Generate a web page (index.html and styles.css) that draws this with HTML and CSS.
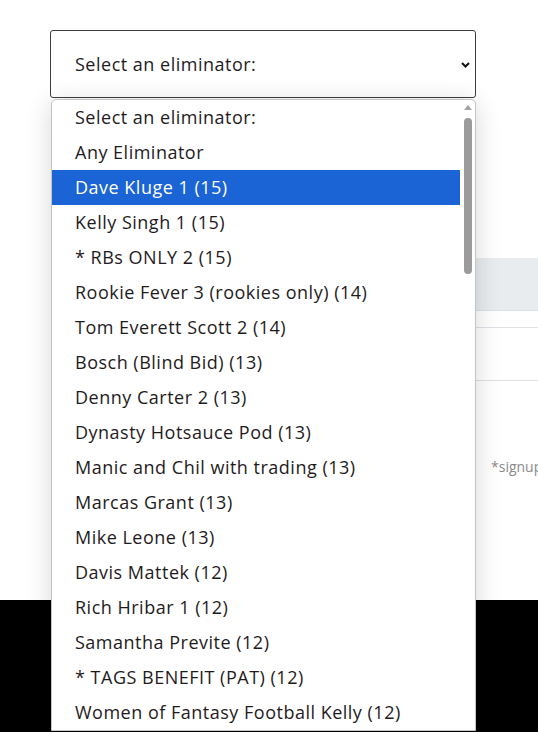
FILE: index.html
```html
<!DOCTYPE html>
<html>
<head>
  <title>Eliminator leagues</title>
  <link rel="stylesheet" href="styles.css">
</head>
<body>
  <main class="page">
    <!-- League picker, shown open -->
    <div class="picker">
      <div class="select-box">
        <span>Select an eliminator:</span>
        <svg class="chevron" width="9" height="6" viewBox="0 0 9 6">
          <path d="M1 1l3.5 3.5L8 1" fill="none" stroke="#111" stroke-width="2"/>
        </svg>
      </div>
      <div class="option-list">
        <ul class="options">
          <li>Select an eliminator:</li>
          <li>Any Eliminator</li>
          <li class="active">Dave Kluge 1 (15)</li>
          <li>Kelly Singh 1 (15)</li>
          <li>* RBs ONLY 2 (15)</li>
          <li>Rookie Fever 3 (rookies only) (14)</li>
          <li>Tom Everett Scott 2 (14)</li>
          <li>Bosch (Blind Bid) (13)</li>
          <li>Denny Carter 2 (13)</li>
          <li>Dynasty Hotsauce Pod (13)</li>
          <li>Manic and Chil with trading (13)</li>
          <li>Marcas Grant (13)</li>
          <li>Mike Leone (13)</li>
          <li>Davis Mattek (12)</li>
          <li>Rich Hribar 1 (12)</li>
          <li>Samantha Previte (12)</li>
          <li>* TAGS BENEFIT (PAT) (12)</li>
          <li>Women of Fantasy Football Kelly (12)</li>
        </ul>
        <div class="scrollbar">
          <span class="arrow"></span>
          <span class="thumb"></span>
        </div>
      </div>
    </div>

    <!-- Standings table behind the picker -->
    <div class="standings">
      <div class="table-head"></div>
      <div class="table-row spacer"></div>
      <div class="table-row"></div>
    </div>

    <p class="note">*signup</p>
  </main>

  <footer class="site-footer"></footer>
</body>
</html>
```

FILE: styles.css
```css
body {
  margin: 0;
  font-family: "Open Sans", sans-serif;
  color: #1f1b1d;
  background: #fff;
  overflow: hidden;
}

.page {
  padding: 30px 0 0 50px;
  height: 600px;
  box-sizing: border-box;
}

.picker {
  position: relative;
  width: 426px;
  z-index: 2;
}

.select-box {
  display: flex;
  align-items: center;
  justify-content: space-between;
  height: 68px;
  box-sizing: border-box;
  padding: 0 5px 0 24px;
  border: 1px solid #3d3d3d;
  border-radius: 3px;
  font-size: 18px;
  letter-spacing: 0.5px;
}

.chevron {
  margin-top: 1px;
}

.option-list {
  position: absolute;
  top: 69px;
  left: 1px;
  right: 0;
  display: flex;
  background: #fff;
  border: 1px solid #c4c4c4;
  border-radius: 5px 5px 0 0;
  box-shadow: 0 4px 26px rgba(0, 0, 0, 0.16);
  overflow: hidden;
}

.options {
  flex: 1;
  list-style: none;
  margin: 0;
  padding: 0;
}

.options li {
  height: 35px;
  line-height: 35px;
  padding-left: 23px;
  font-size: 18px;
  letter-spacing: 0.5px;
  white-space: nowrap;
}

.options li.active {
  background: #1b64d5;
  color: #fff;
}

.scrollbar {
  flex: 0 0 15px;
  display: flex;
  flex-direction: column;
  align-items: center;
  padding-top: 5px;
}

.arrow {
  width: 0;
  height: 0;
  border-left: 4px solid transparent;
  border-right: 4px solid transparent;
  border-bottom: 5px solid #a3a3a3;
}

.thumb {
  margin-top: 8px;
  width: 8px;
  height: 156px;
  border-radius: 4px;
  background: #9b9b9b;
}

.standings {
  margin-top: 160px;
  margin-left: 2px;
}

.table-head {
  height: 52px;
  background: #e9ecef;
  border-bottom: 1px solid #dcdfe3;
}

.table-row {
  height: 52px;
  border-bottom: 1px solid #dee2e6;
}

.table-row.spacer {
  height: 16px;
}

.note {
  margin: 76px 0 0;
  padding-left: 441px;
  white-space: nowrap;
  font-size: 14px;
  color: #8a8a8a;
}

.site-footer {
  height: 200px;
  background: #000;
}
```
